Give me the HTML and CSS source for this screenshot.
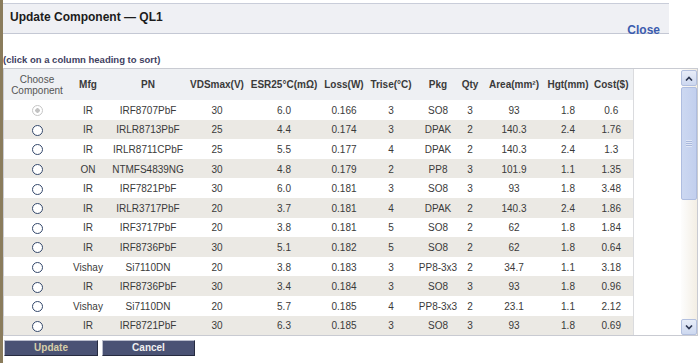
FILE: index.html
```html
<!DOCTYPE html>
<html lang="en">
<head>
    <meta charset="UTF-8">
    <meta name="viewport" content="width=device-width, initial-scale=1.0">
    <title>Update Component — QL1</title>
    <link rel="stylesheet" href="styles.css">
</head>
<body>
    <div class="strip"></div>
    <div class="main">
        <div class="titlebar">
            <h1 class="title">Update Component — QL1</h1>
            <a class="close" href="#">Close</a>
        </div>

        <p class="hint">(click on a column heading to sort)</p>

        <div class="grid-box">
            <div class="grid-scroll">
                <table class="parts">
                    <colgroup>
                        <col style="width: 66px">
                        <col style="width: 36px">
                        <col style="width: 84px">
                        <col style="width: 54px">
                        <col style="width: 80px">
                        <col style="width: 40px">
                        <col style="width: 54px">
                        <col style="width: 40px">
                        <col style="width: 24px">
                        <col style="width: 64px">
                        <col style="width: 44px">
                        <col style="width: 43px">
                    </colgroup>
                    <thead>
                        <tr>
                            <th class="choose">Choose<br>Component</th>
                            <th>Mfg</th>
                            <th>PN</th>
                            <th>VDSmax(V)</th>
                            <th>ESR25°C(mΩ)</th>
                            <th>Loss(W)</th>
                            <th>Trise(°C)</th>
                            <th>Pkg</th>
                            <th>Qty</th>
                            <th>Area(mm²)</th>
                            <th>Hgt(mm)</th>
                            <th>Cost($)</th>
                        </tr>
                    </thead>
                    <tbody>
                        <tr><td><input type="radio" name="part" class="radio" checked disabled></td><td>IR</td><td>IRF8707PbF</td><td>30</td><td>6.0</td><td>0.166</td><td>3</td><td>SO8</td><td>3</td><td>93</td><td>1.8</td><td>0.6</td></tr>
                        <tr><td><input type="radio" name="part" class="radio"></td><td>IR</td><td>IRLR8713PbF</td><td>25</td><td>4.4</td><td>0.174</td><td>3</td><td>DPAK</td><td>2</td><td>140.3</td><td>2.4</td><td>1.76</td></tr>
                        <tr><td><input type="radio" name="part" class="radio"></td><td>IR</td><td>IRLR8711CPbF</td><td>25</td><td>5.5</td><td>0.177</td><td>4</td><td>DPAK</td><td>2</td><td>140.3</td><td>2.4</td><td>1.3</td></tr>
                        <tr><td><input type="radio" name="part" class="radio"></td><td>ON</td><td>NTMFS4839NG</td><td>30</td><td>4.8</td><td>0.179</td><td>2</td><td>PP8</td><td>3</td><td>101.9</td><td>1.1</td><td>1.35</td></tr>
                        <tr><td><input type="radio" name="part" class="radio"></td><td>IR</td><td>IRF7821PbF</td><td>30</td><td>6.0</td><td>0.181</td><td>3</td><td>SO8</td><td>3</td><td>93</td><td>1.8</td><td>3.48</td></tr>
                        <tr><td><input type="radio" name="part" class="radio"></td><td>IR</td><td>IRLR3717PbF</td><td>20</td><td>3.7</td><td>0.181</td><td>4</td><td>DPAK</td><td>2</td><td>140.3</td><td>2.4</td><td>1.86</td></tr>
                        <tr><td><input type="radio" name="part" class="radio"></td><td>IR</td><td>IRF3717PbF</td><td>20</td><td>3.8</td><td>0.181</td><td>5</td><td>SO8</td><td>2</td><td>62</td><td>1.8</td><td>1.84</td></tr>
                        <tr><td><input type="radio" name="part" class="radio"></td><td>IR</td><td>IRF8736PbF</td><td>30</td><td>5.1</td><td>0.182</td><td>5</td><td>SO8</td><td>2</td><td>62</td><td>1.8</td><td>0.64</td></tr>
                        <tr><td><input type="radio" name="part" class="radio"></td><td>Vishay</td><td>Si7110DN</td><td>20</td><td>3.8</td><td>0.183</td><td>3</td><td>PP8-3x3</td><td>2</td><td>34.7</td><td>1.1</td><td>3.18</td></tr>
                        <tr><td><input type="radio" name="part" class="radio"></td><td>IR</td><td>IRF8736PbF</td><td>30</td><td>3.4</td><td>0.184</td><td>3</td><td>SO8</td><td>3</td><td>93</td><td>1.8</td><td>0.96</td></tr>
                        <tr><td><input type="radio" name="part" class="radio"></td><td>Vishay</td><td>Si7110DN</td><td>20</td><td>5.7</td><td>0.185</td><td>4</td><td>PP8-3x3</td><td>2</td><td>23.1</td><td>1.1</td><td>2.12</td></tr>
                        <tr><td><input type="radio" name="part" class="radio"></td><td>IR</td><td>IRF8721PbF</td><td>30</td><td>6.3</td><td>0.185</td><td>3</td><td>SO8</td><td>3</td><td>93</td><td>1.8</td><td>0.69</td></tr>
                    </tbody>
                </table>
            </div>

            <!-- fake scrollbar, styled like the old IE/XP one -->
            <div class="scrollbar">
                <div class="sb-btn">
                    <svg width="8" height="5" viewBox="0 0 8 5"><polyline points="1,4.5 4,1.5 7,4.5" fill="none" stroke="#2b3550" stroke-width="1.6"/></svg>
                </div>
                <div class="sb-thumb">
                    <span class="grip"></span>
                </div>
                <div class="sb-track"></div>
                <div class="sb-btn">
                    <svg width="8" height="5" viewBox="0 0 8 5"><polyline points="1,0.5 4,3.5 7,0.5" fill="none" stroke="#2b3550" stroke-width="1.6"/></svg>
                </div>
            </div>
        </div>

        <div class="actions">
            <button class="btn btn-update">Update</button>
            <button class="btn btn-cancel">Cancel</button>
        </div>
    </div>
</body>
</html>
```

FILE: styles.css
```css
body {
    margin: 0;
    font-family: "Liberation Sans", Arial, sans-serif;
    color: #3a3a3a;
    background-color: #fff;
    display: flex;
    min-height: 100vh;
}

.strip {
    width: 3px;
    background-color: #8a7c5c;
    flex-shrink: 0;
}

.main {
    flex: 1;
    display: flex;
    flex-direction: column;
}

.titlebar {
    margin-top: 3px;
    margin-right: 31px;
    height: 29px;
    background-color: #eff0f4;
    border-top: 1px solid #c9cdd9;
    border-bottom: 1px solid #c4c8d4;
    display: flex;
    justify-content: space-between;
}

.title {
    margin: 0;
    padding: 6px 0 0 7px;
    font-size: 12px;
    line-height: 14px;
    font-weight: bold;
    color: #1c1c1c;
}

.close {
    align-self: flex-end;
    margin: 0 9px -4px 0;
    font-size: 12px;
    line-height: 14px;
    font-weight: bold;
    color: #3b5cae;
    text-decoration: none;
}

.hint {
    margin: 20px 0 2px 0;
    font-size: 9.5px;
    line-height: 12px;
    font-weight: bold;
    color: #41415f;
}

.grid-box {
    margin-right: 2px;
    height: 266px;
    border: 1px solid #c9cbd2;
    display: flex;
}

.grid-scroll {
    flex: 1;
    overflow: hidden;
}

.parts {
    table-layout: fixed;
    width: 629px;
    border-collapse: collapse;
    border-right: 1px solid #dadbde;
    font-size: 10px;
}

.parts th,
.parts td {
    padding: 0;
    text-align: center;
    white-space: nowrap;
}

.parts thead tr {
    height: 31px;
    background-color: #eef0f3;
}

.parts th {
    font-weight: bold;
    color: #3a3a3a;
}

.parts th.choose {
    font-weight: normal;
    color: #555;
    line-height: 11px;
    padding-top: 1px;
}

.parts tbody tr {
    height: 19.6px;
}

.parts tbody td {
    padding-top: 1px;
}

.parts tbody tr:nth-child(even) {
    background-color: #ebe9e4;
}

.radio {
    appearance: none;
    -webkit-appearance: none;
    width: 11px;
    height: 11px;
    margin: 0;
    vertical-align: middle;
    border: 1px solid #34486b;
    border-radius: 50%;
    background-color: #fff;
}

.radio:checked:disabled {
    border-color: #c6c6c6;
    background: radial-gradient(circle, #c2c2c2 0 2px, #fff 2.5px);
}

.scrollbar {
    width: 16px;
    display: flex;
    flex-direction: column;
    background: linear-gradient(to right, #fdfdfd, #f3eee4);
}

.sb-btn {
    height: 14px;
    margin-top: 1px;
    border: 1px solid #b3c0df;
    border-radius: 2px;
    background: linear-gradient(#e8edf8, #cdd8f0);
    display: flex;
    align-items: center;
    justify-content: center;
}

.sb-thumb {
    height: 111px;
    margin-top: 1px;
    border: 1px solid #aebde0;
    border-radius: 2px;
    background: linear-gradient(to right, #ccd8f1, #c2cfee);
    display: flex;
    align-items: center;
    justify-content: center;
}

.grip {
    width: 6px;
    height: 7px;
    background: repeating-linear-gradient(#dfe6f6 0 1px, #a9b8dc 1px 2px);
}

.sb-track {
    flex: 1;
}

.actions {
    margin-top: 4px;
    margin-left: 1px;
    display: flex;
    gap: 4px;
}

.btn {
    height: 16px;
    padding: 0;
    font-family: "Liberation Sans", Arial, sans-serif;
    font-size: 10px;
    font-weight: bold;
    line-height: 12px;
    background-color: #4a5274;
    border-top: 1px solid #b9bdcc;
    border-left: 1px solid #b9bdcc;
    border-right: 1px solid #262b40;
    border-bottom: 1px solid #262b40;
    cursor: pointer;
}

.btn-update {
    width: 94px;
    color: #d6cea9;
}

.btn-cancel {
    width: 93px;
    color: #f0f0f0;
}
```
